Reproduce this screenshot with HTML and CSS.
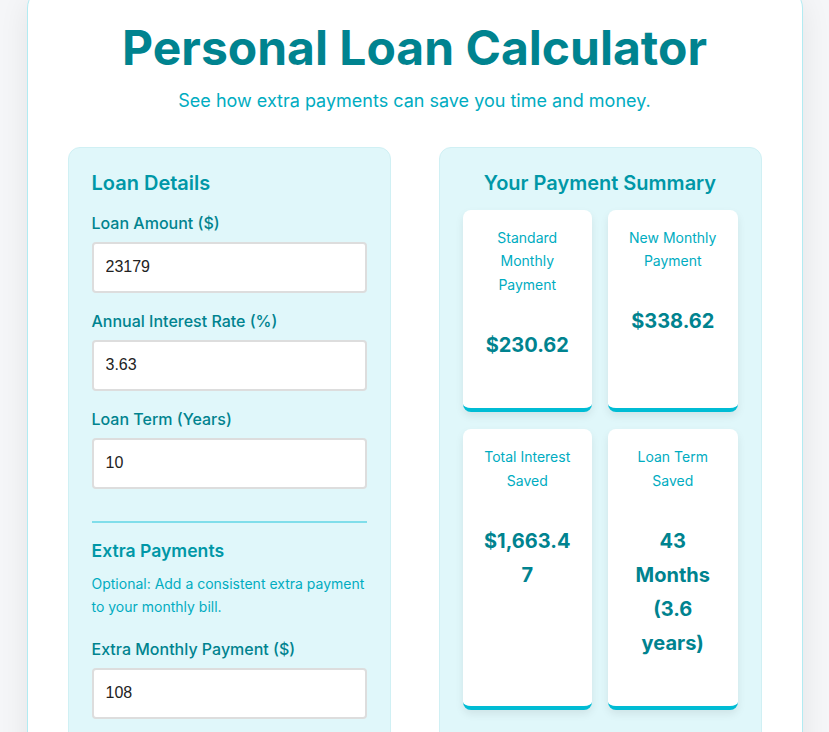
FILE: index.html
```html
<!DOCTYPE html>
<html lang="en">
<head>
<meta charset="utf-8">
<title>Personal Loan Calculator</title>
<link rel="stylesheet" href="styles.css">
</head>
<body>
<div class="container">
  <header class="header">
    <h1 class="title">Personal Loan Calculator</h1>
    <p class="subtitle">See how extra payments can save you time and money.</p>
  </header>
  <div class="columns">
    <section class="panel">
      <h2 class="panel-title">Loan Details</h2>
      <div class="field">
        <label class="label">Loan Amount ($)</label>
        <input class="input" type="text" value="23179">
      </div>
      <div class="field">
        <label class="label">Annual Interest Rate (%)</label>
        <input class="input" type="text" value="3.63">
      </div>
      <div class="field">
        <label class="label">Loan Term (Years)</label>
        <input class="input" type="text" value="10">
      </div>
      <div class="extra">
        <h3 class="extra-title">Extra Payments</h3>
        <p class="hint">Optional: Add a consistent extra payment to your monthly bill.</p>
        <div class="field">
          <label class="label">Extra Monthly Payment ($)</label>
          <input class="input" type="text" value="108">
        </div>
      </div>
    </section>
    <section class="panel summary">
      <h2 class="panel-title center">Your Payment Summary</h2>
      <div class="cards">
        <div class="card">
          <p class="card-label">Standard Monthly Payment</p>
          <p class="card-value">$230.62</p>
        </div>
        <div class="card">
          <p class="card-label">New Monthly Payment</p>
          <p class="card-value">$338.62</p>
        </div>
        <div class="card">
          <p class="card-label">Total Interest Saved</p>
          <p class="card-value">$1,663.47</p>
        </div>
        <div class="card">
          <p class="card-label">Loan Term Saved</p>
          <p class="card-value">43 Months (3.6 years)</p>
        </div>
      </div>
    </section>
  </div>
</div>
</body>
</html>
```

FILE: styles.css
```css
* { box-sizing: border-box; }

body {
  margin: 0;
  background: #f5f6f8;
  font-family: Inter, "Noto Sans", sans-serif;
  line-height: 1.7;
}

.container {
  max-width: 776px;
  margin: -12px auto 0;
  background: #ffffff;
  border: 1px solid #b2ebf2;
  border-radius: 20px;
  padding: 30px 40px 40px;
  box-shadow: 0 10px 30px rgba(0, 0, 0, 0.08);
}

.header {
  text-align: center;
}

.title {
  margin: 0;
  font-size: 48px;
  line-height: 57.6px;
  font-weight: 700;
  color: #00838f;
}

.subtitle {
  margin: 10px 0 0;
  font-size: 18px;
  line-height: 28px;
  color: #00acc1;
}

.columns {
  display: grid;
  grid-template-columns: 1fr 1fr;
  gap: 48px;
  margin-top: 32px;
}

.panel {
  background: #e0f7fa;
  border: 1px solid #d0f0f4;
  border-radius: 12px;
  padding: 23px 23px 24px;
}

.panel-title {
  margin: 0 0 17px;
  font-size: 20px;
  line-height: 24px;
  font-weight: 600;
  color: #0097a7;
}

.center { text-align: center; }

.field {
  display: flex;
  flex-direction: column;
  margin-bottom: 17px;
}

.label {
  font-size: 16px;
  line-height: 22px;
  font-weight: 500;
  color: #00838f;
  margin-bottom: 8px;
}

.input {
  width: 100%;
  height: 51px;
  padding: 12px;
  border: 2px solid #dddddd;
  border-radius: 4px;
  background: #ffffff;
  font-family: "Liberation Sans", Arial, sans-serif;
  font-size: 16px;
  color: #222222;
}

.extra {
  margin-top: 32px;
  border-top: 2px solid #80deea;
  padding-top: 16px;
}

.extra-title {
  margin: 0 0 9px;
  font-size: 17.6px;
  line-height: 24px;
  font-weight: 600;
  color: #0097a7;
}

.hint {
  margin: 0 0 19px;
  font-size: 14px;
  line-height: 23.5px;
  color: #00acc1;
}

.summary .panel-title {
  margin-bottom: 15px;
}

.cards {
  display: grid;
  grid-template-columns: 1fr 1fr;
  gap: 17px 16px;
}

.card {
  background: #ffffff;
  border-radius: 8px;
  border-bottom: 4px solid #00bcd4;
  box-shadow: 0 4px 8px rgba(0, 0, 0, 0.08);
  padding: 16px 18px 46px;
  text-align: center;
}

.card-label {
  margin: 0 0 31px;
  font-size: 14px;
  line-height: 23.8px;
  color: #00acc1;
}

.card-value {
  margin: 0;
  font-size: 20px;
  line-height: 34px;
  font-weight: 700;
  color: #00838f;
  overflow-wrap: anywhere;
}
```
